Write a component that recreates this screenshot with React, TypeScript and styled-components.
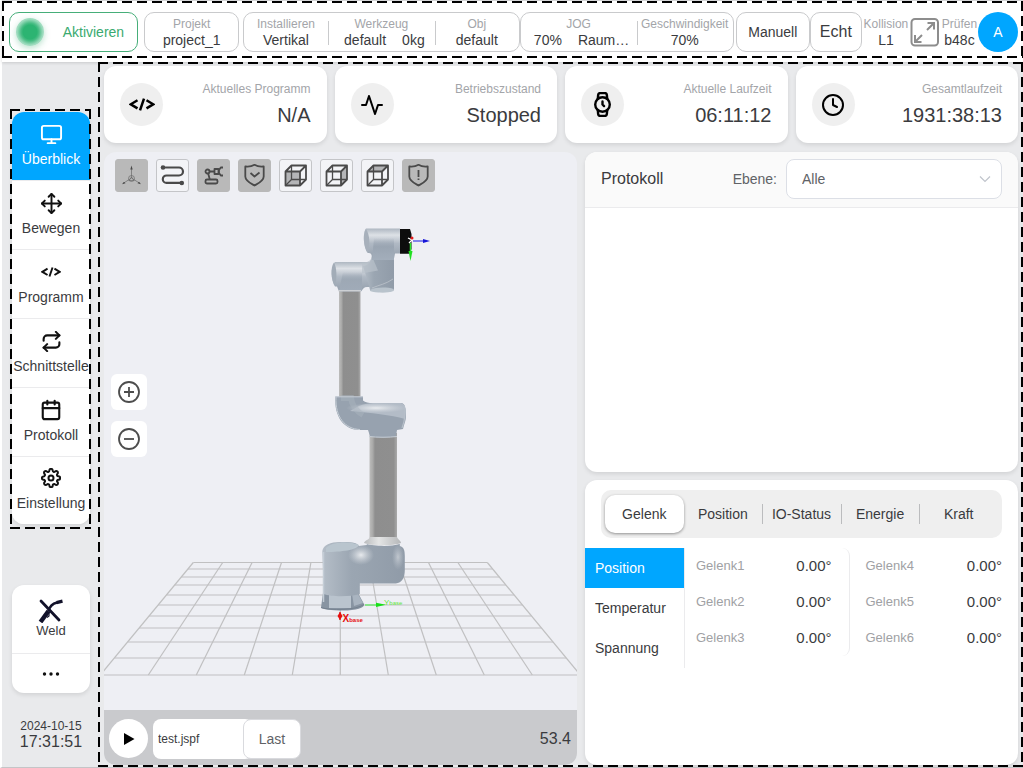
import React from "react";
import styled, { createGlobalStyle, css } from "styled-components";
import { FiActivity, FiCalendar, FiClock, FiMonitor, FiMove, FiRepeat, FiSettings, FiWatch } from "react-icons/fi";

const blue = "#00a6ff";
const muted = "#a3a5a9";
const line = "#ebebed";

const GlobalStyle = createGlobalStyle`
  *, *::before, *::after { box-sizing: border-box; }
  body {
    margin: 0;
    background: #e9eaec;
    color: #3a3b3e;
    font: 14px/16px "Liberation Sans", Arial, sans-serif;
  }
  button, input, select { font: inherit; color: inherit; margin: 0; }
  button { cursor: pointer; padding: 0; border: 0; background: none; }
  svg { display: block; flex: none; }
`;

const dashX = "repeating-linear-gradient(90deg, #000 0 10px, transparent 10px 15px)";
const dashY = "repeating-linear-gradient(180deg, #000 0 10px, transparent 10px 15px)";

/* Dashed frame laid over a region of the page. */
const Outline = styled.div<{ $inset?: string }>`
  position: absolute;
  inset: ${(p) => p.$inset ?? "0"};
  z-index: 3;
  pointer-events: none;
  background:
    ${dashX} top / 100% 2px no-repeat,
    ${dashX} bottom / 100% 2px no-repeat,
    ${dashY} left / 2px 100% no-repeat,
    ${dashY} right / 2px 100% no-repeat;
`;

const Page = styled.div`
  display: flex;
  flex-direction: column;
  min-height: 100vh;
  border-left: 2px solid #fff;
  border-bottom: 1px solid #c4c5c7;
`;

const Header = styled.header`
  position: relative;
  display: grid;
  grid-template-columns: 129fr 101fr 280fr 214fr 76fr 52fr 48fr 31px 37fr 40px;
  align-items: center;
  height: 62px;
  padding: 1px 5px 0 7px;
  background: #fff;
  border-top: 1px solid #d5d6d8;
  box-shadow: 0 1px 3px rgba(0, 0, 0, 0.14);
  z-index: 2;
`;

const box = css`
  height: 40px;
  border: 1px solid #c9cacc;
  border-radius: 10px;
  background: #fff;
`;

const EnableButton = styled.button`
  ${box}
  display: flex;
  align-items: center;
  justify-content: space-between;
  padding: 0 13px 0 6px;
  color: #3aaa70;
  border-color: #46ae79;
`;

const StatusLight = styled.span`
  width: 28px;
  height: 28px;
  border-radius: 50%;
  background: radial-gradient(circle, #2cb472 0 7px, #49bd85 9px, #9fdcbf 13px);
  box-shadow: 0 2px 6px rgba(58, 170, 112, 0.35);
`;

const Group = styled.div<{ $cols: string; $gap?: number }>`
  ${box}
  display: grid;
  grid-template-columns: ${(p) => p.$cols};
  align-items: center;
  margin-left: ${(p) => p.$gap ?? 0}px;
`;

const Field = styled.div<{ $split?: boolean }>`
  position: relative;
  display: flex;
  flex-direction: column;
  align-items: center;
  min-width: 0;
  white-space: nowrap;
  &::before {
    content: ${(p) => (p.$split ? '""' : "none")};
    position: absolute;
    left: 0;
    top: 4px;
    height: 24px;
    border-left: 1px solid #c9cacc;
  }
`;

const FieldLabel = styled.span`
  font-size: 12px;
  line-height: 15px;
  color: ${muted};
`;

const FieldValue = styled.span<{ $pair?: boolean }>`
  display: flex;
  gap: 16px;
  padding-left: ${(p) => (p.$pair ? "6px" : "0")};
`;

const ModeButton = styled.button<{ $large?: boolean; $gap?: boolean }>`
  ${box}
  font-size: ${(p) => (p.$large ? "16px" : "14px")};
  margin-left: ${(p) => (p.$gap ? "2px" : "0")};
`;

const Avatar = styled.button`
  width: 40px;
  height: 40px;
  border-radius: 50%;
  background: ${blue};
  color: #fff;
`;

const Body = styled.div`
  display: flex;
  flex: 1;
`;

const Sidebar = styled.aside`
  display: flex;
  flex-direction: column;
  width: 96px;
  flex: none;
  padding: 50px 8px 10px 10px;
`;

const MenuWrap = styled.div`
  position: relative;
`;

const card = css`
  background: #fff;
  border-radius: 12px;
  box-shadow: 0 2px 4px rgba(0, 0, 0, 0.1);
`;

const Menu = styled.nav`
  ${card}
  overflow: hidden;
`;

const MenuButton = styled.button<{ $active?: boolean }>`
  display: flex;
  flex-direction: column;
  align-items: center;
  gap: 5px;
  width: 100%;
  height: 69px;
  padding-top: 10px;
  white-space: nowrap;
  border-bottom: 1px solid ${line};
  background: ${(p) => (p.$active ? blue : "#fff")};
  color: ${(p) => (p.$active ? "#fff" : "inherit")};
  svg { color: ${(p) => (p.$active ? "#fff" : "#111")}; }
  &:last-child { border-bottom: 0; height: 67px; padding-top: 9px; }
`;

const IconSlot = styled.span`
  display: grid;
  place-items: center;
  height: 24px;
`;

const Plugins = styled.div`
  ${card}
  margin-top: 61px;
  overflow: hidden;
`;

const PluginButton = styled.button<{ $height: number }>`
  display: flex;
  flex-direction: column;
  align-items: center;
  justify-content: center;
  width: 100%;
  height: ${(p) => p.$height}px;
  font-size: 13px;
  & + & { border-top: 1px solid ${line}; }
`;

const DateTime = styled.div`
  margin-top: 26px;
  text-align: center;
  font-size: 12px;
  line-height: 14px;
`;

const Time = styled.time`
  display: block;
  font-size: 16px;
  line-height: 18px;
`;

const Content = styled.main`
  position: relative;
  flex: 1;
  min-width: 0;
  display: flex;
  flex-direction: column;
  gap: 9px;
  padding: 4px 5px 2px 6px;
`;

const Stats = styled.section`
  display: grid;
  grid-template-columns: repeat(4, 1fr);
  gap: 8px;
`;

const StatCard = styled.article`
  ${card}
  display: flex;
  align-items: center;
  justify-content: space-between;
  height: 77px;
  padding: 0 16px;
`;

const StatIcon = styled.span`
  display: grid;
  place-items: center;
  width: 43px;
  height: 43px;
  border-radius: 50%;
  background: #efefef;
  color: #000;
`;

const StatText = styled.div`
  display: flex;
  flex-direction: column;
  gap: 6px;
  text-align: right;
  white-space: nowrap;
`;

const StatLabel = styled.span`
  font-size: 12px;
  line-height: 15px;
  color: ${muted};
`;

const StatValue = styled.strong`
  font-size: 20px;
  font-weight: 400;
  line-height: 24px;
`;

const Panels = styled.div`
  flex: 1;
  display: grid;
  grid-template-columns: 473fr 433fr;
  gap: 8px;
`;

const Viewer = styled.section`
  display: flex;
  flex-direction: column;
  border-radius: 12px;
  overflow: hidden;
  background: #eeeff4;
`;

const Stage = styled.div`
  position: relative;
  flex: 1;
  min-height: 0;
`;

const Scene = styled.svg`
  width: 100%;
  height: auto;
`;

const ViewTools = styled.div`
  position: absolute;
  left: 11px;
  top: 7px;
  display: flex;
  gap: 8px;
`;

const ToolButton = styled.button<{ $on?: boolean }>`
  display: grid;
  place-items: center;
  width: 33px;
  height: 33px;
  border-radius: 3px;
  border: 1px solid ${(p) => (p.$on ? "#b9b9b9" : "#c4c5c8")};
  background: ${(p) => (p.$on ? "#b9b9b9" : "#f3f4f7")};
  color: #4a4a4a;
`;

const ZoomTools = styled.div`
  position: absolute;
  left: 7px;
  top: 222px;
  display: flex;
  flex-direction: column;
  gap: 11px;
`;

const ZoomButton = styled.button`
  display: grid;
  place-items: center;
  width: 36px;
  height: 36px;
  border-radius: 6px;
  background: #fff;
  color: #4d4d4d;
`;

const PlayBar = styled.form`
  display: flex;
  align-items: center;
  height: 55px;
  padding: 2px 6px 0 5px;
  background: #c9cacd;
`;

const PlayButton = styled.button`
  display: grid;
  place-items: center;
  width: 39px;
  height: 39px;
  border-radius: 50%;
  background: #fff;
`;

const FileInput = styled.input`
  width: 100px;
  height: 40px;
  margin-left: 5px;
  padding: 0 5px;
  border: 0;
  border-radius: 8px;
  background: #fff;
  font-size: 12px;
`;

const LoadButton = styled.button`
  width: 58px;
  height: 40px;
  margin-left: -10px;
  border: 1px solid #d9dade;
  border-radius: 8px;
  background: #fff;
  color: #606266;
`;

const Readout = styled.output`
  margin-left: auto;
  font-size: 16px;
`;

const SidePanels = styled.div`
  display: flex;
  flex-direction: column;
  gap: 8px;
  min-width: 0;
`;

const LogPanel = styled.section`
  ${card}
  height: 320px;
  overflow: hidden;
`;

const LogHead = styled.div`
  display: flex;
  align-items: center;
  height: 56px;
  padding: 0 16px 2px;
  background: #fafafa;
  border-bottom: 1px solid ${line};
`;

const LogTitle = styled.h2`
  margin: 0 auto 0 0;
  font-size: 16px;
  font-weight: 400;
`;

const LevelLabel = styled.label`
  margin-right: 9px;
  color: #606266;
`;

const SelectWrap = styled.span`
  position: relative;
  width: 216px;
  svg {
    position: absolute;
    right: 11px;
    top: 14px;
    pointer-events: none;
  }
`;

const LevelSelect = styled.select`
  appearance: none;
  width: 100%;
  height: 40px;
  padding: 0 15px;
  border: 1px solid #dcdfe6;
  border-radius: 8px;
  background: #fff;
  color: #606266;
`;

const DataPanel = styled.section`
  ${card}
  flex: 1;
  padding-top: 10px;
`;

const Tabs = styled.div`
  display: grid;
  grid-template-columns: repeat(5, 1fr);
  height: 48px;
  margin: 0 16px;
  padding: 5px 4px;
  border-radius: 10px;
  background: #efefef;
`;

const Tab = styled.button<{ $active?: boolean; $split?: boolean }>`
  position: relative;
  white-space: nowrap;
  border-radius: 10px;
  background: ${(p) => (p.$active ? "#fff" : "none")};
  box-shadow: ${(p) => (p.$active ? "0 1px 3px rgba(0, 0, 0, 0.4)" : "none")};
  &::before {
    content: ${(p) => (p.$split ? '""' : "none")};
    position: absolute;
    left: 0;
    top: 9px;
    height: 20px;
    border-left: 1px solid #bbbcbe;
  }
`;

const DataBody = styled.div`
  display: grid;
  grid-template-columns: 100px 165fr 169fr;
  align-items: start;
  margin-top: 10px;
`;

const Kinds = styled.div`
  display: flex;
  flex-direction: column;
  border-right: 1px solid ${line};
`;

const KindButton = styled.button<{ $active?: boolean }>`
  height: 40px;
  padding-left: 10px;
  text-align: left;
  background: ${(p) => (p.$active ? blue : "none")};
  color: ${(p) => (p.$active ? "#fff" : "inherit")};
`;

const JointBlock = styled.div<{ $first?: boolean }>`
  padding: ${(p) => (p.$first ? "0 17px 0 11px" : "0 16px")};
  border-right: ${(p) => (p.$first ? "1px solid #ebebed" : "0")};
  border-radius: 8px;
`;

const Joints = styled.table`
  width: 100%;
  border-collapse: collapse;
  th, td { height: 36px; padding: 0; }
  th { text-align: left; font-weight: 400; font-size: 13px; color: #a0a1a4; }
  td { text-align: right; font-size: 15px; }
`;

const CodeIcon = ({ width }: { width: number }) => (
  <svg width={width} height={width / 2} viewBox="0 0 26 13" fill="none" stroke="currentColor" strokeWidth="2.5">
    <path d="M8.500 2.200 1.800 6.300l6.700 4.100M17.500 2.200l6.700 4.100-6.700 4.100M15 .6 11 12.400" />
  </svg>
);

const ExpandIcon = () => (
  <svg width="30" height="30" viewBox="0 0 30 30" fill="none" stroke="#8d8d8d" strokeWidth="2">
    <rect x="1.500" y="2" width="26.500" height="26.500" rx="3.500" />
    <path d="M17 13 24 6M17.500 6H24v6.500M12 18l-7 7M5 18v7h6.500" />
  </svg>
);

const WeldIcon = () => (
  <svg width="28" height="24" viewBox="0 0 28 24" fill="none" stroke="#12122a">
    <path d="M4 2 22 21" strokeWidth="2.800" strokeLinecap="round" />
    <path d="M11.500 12 3.500 23" strokeWidth="4.500" />
    <path d="M11.500 12C13 6 16 4.500 20 3.500" strokeWidth="2.500" />
    <path d="m19.500 3.600 6-1.500" strokeWidth="3.200" />
    <path d="M12 13.500v3.500l-2 1.500" strokeWidth="1.200" />
  </svg>
);

const DotsIcon = () => (
  <svg width="18" height="6" viewBox="0 0 18 6" fill="#111">
    <circle cx="2.500" cy="3" r="1.700" />
    <circle cx="9" cy="3" r="1.700" />
    <circle cx="15.500" cy="3" r="1.700" />
  </svg>
);

const ToolSvg = ({ children }: { children: React.ReactNode }) => (
  <svg width="25" height="25" viewBox="0 0 25 25" fill="none" stroke="currentColor" strokeWidth="1.800" strokeLinejoin="round">
    {children}
  </svg>
);

const AxesIcon = () => (
  <ToolSvg>
    <g strokeWidth=".7" stroke="#6a6a6a">
      <path d="M12.500 15V5M12.500 15 4 20.500M12.500 15l8.500 5.500" />
      <circle cx="12.500" cy="15.500" r="3" />
      <path d="m10 17.500 2.500-3.500 2.500 3.500z" />
    </g>
    <path d="m12.500 2.500 1.200 4h-2.400zM3 21.300l2-2.600 1.500 1.600zM22 21.300l-2-2.600-1.500 1.600z" fill="currentColor" stroke="none" />
  </ToolSvg>
);

const PathIcon = () => (
  <ToolSvg>
    <path d="M3 4.500h16a4 4 0 0 1 0 8H6.500a3.700 3.700 0 0 0 0 7.400H22" strokeWidth="2.200" />
    <g fill="currentColor" stroke="none">
      <circle cx="3" cy="4.500" r="2.300" />
      <circle cx="21.800" cy="20" r="2.300" />
    </g>
  </ToolSvg>
);

const ArmIcon = () => (
  <ToolSvg>
    <circle cx="6.500" cy="8.500" r="2" />
    <path d="M8.500 8.500h5M7.200 10.500l1.600 6M13.500 6h4v5h-4zM22 4.500h-2.200L18 7v3l1.800 2.500H22" />
    <rect x="4.500" y="16.500" width="12" height="4" rx="1.500" />
  </ToolSvg>
);

const shield = "M12.500 1.800C9.500 3.600 7 4 3.300 3.500v10c0 4.500 5.400 6.800 9.200 9 3.800-2.200 9.200-4.500 9.200-9v-10c-3.700.5-6.200.1-9.200-1.700z";

const ShieldIcon = ({ mark }: { mark: string }) => (
  <ToolSvg>
    <path d={shield} />
    <path d={mark} />
  </ToolSvg>
);

const CubeIcon = ({ face }: { face: string }) => (
  <ToolSvg>
    <path d={face} fill="#b4b5b7" stroke="none" />
    <path d="M2.500 8.500h14.500v14H2.500zM2.500 8.500l6-6H23l-6 6M23 2.500v14l-6 6" />
    <path d="M8.500 2.500v14H23M8.500 16.500l-6 6" strokeWidth="1.300" />
  </ToolSvg>
);

const ZoomIcon = ({ plus }: { plus?: boolean }) => (
  <svg width="24" height="24" viewBox="0 0 24 24" fill="none" stroke="currentColor" strokeWidth="1.800">
    <circle cx="12" cy="12" r="10" />
    <path d={plus ? "M7 12h10M12 7v10" : "M7 12h10"} />
  </svg>
);

const rowsY = [562.5, 569, 577, 585, 595, 605, 616, 628, 642, 658, 675];
const gridLines = Array.from({ length: 11 }, (_, i) => i - 5);

const RobotScene = () => (
  <Scene viewBox="104 152 473 558" role="img" aria-label="Roboter">
    <defs>
      <linearGradient id="shellV" x1="0" y1="0" x2="0" y2="1">
        <stop offset="0" stopColor="#aeb7c1" />
        <stop offset=".22" stopColor="#dde1e6" />
        <stop offset=".5" stopColor="#b0b9c4" />
        <stop offset="1" stopColor="#949fac" />
      </linearGradient>
      <linearGradient id="shellH" x1="0" y1="0" x2="1" y2="0">
        <stop offset="0" stopColor="#b5bec8" />
        <stop offset=".35" stopColor="#9ba6b2" />
        <stop offset="1" stopColor="#909ba8" />
      </linearGradient>
      <linearGradient id="neck" x1="0" y1="0" x2="0" y2="1">
        <stop offset="0" stopColor="#9aa5b2" stopOpacity="0" />
        <stop offset=".4" stopColor="#9aa5b2" />
        <stop offset="1" stopColor="#a3aebb" />
      </linearGradient>
      <linearGradient id="tube" x1="0" y1="0" x2="1" y2="0">
        <stop offset="0" stopColor="#bdbdbc" />
        <stop offset=".12" stopColor="#a9a9a8" />
        <stop offset=".2" stopColor="#8e8e8e" />
        <stop offset=".88" stopColor="#8f8f8f" />
        <stop offset="1" stopColor="#aaaaaa" />
      </linearGradient>
      <linearGradient id="collar" x1="0" y1="0" x2="1" y2="0">
        <stop offset="0" stopColor="#b9bbbd" />
        <stop offset=".4" stopColor="#e4e5e5" />
        <stop offset="1" stopColor="#b5b7b9" />
      </linearGradient>
      <radialGradient id="glow">
        <stop offset="0" stopColor="#f0f2f4" stopOpacity=".9" />
        <stop offset="1" stopColor="#d5dae0" stopOpacity="0" />
      </radialGradient>
    </defs>

    <g stroke="#c0c0c1" strokeWidth="1.200">
      {rowsY.map((y) => {
        const half = 147 + ((y - 562.5) * 93) / 112.5;
        return <line key={y} x1={340.3 - half} x2={340.3 + half} y1={y} y2={y} />;
      })}
      {gridLines.map((i) => (
        <line key={i} x1={340.3 + i * 29.4} y1={562.5} x2={340.3 + i * 48} y2={675} />
      ))}
    </g>

    <rect x="339" y="288" width="21.500" height="112" fill="url(#tube)" />
    <rect x="369.500" y="433" width="27.500" height="108" fill="url(#tube)" />

    <path d="M335 262h40v25l-8 0c-3 0-4 2-6 4.500h-22l-2-5h-2c-4-6-5-20 0-24.500z" fill="url(#shellV)" />
    <path d="M343 272h19v19h-23z" fill="url(#neck)" opacity=".8" />
    <path d="M334 262.500c-4 5-3 18 1 23 2-7 2-18-1-23z" fill="#a2acb7" />
    <path d="M372 246h22v44c-5 3-17 3-24 0l-1-4c-2-8-4-13-6-20 5 0 9-5 9-12z" fill="url(#shellH)" />
    <path d="M362 262.500c6 0 9-2 10-6l6 14-16 3z" fill="#b9c2cb" opacity=".7" />
    <path d="M366 228.500h34v25h-5l-1 5h-22c0-4-1-6-4-5.500-4-3-6-20-2-24.500z" fill="url(#shellV)" />
    <path d="M374 238h20v22h-22z" fill="url(#neck)" />
    <path d="M366 229c-4 5-2 20 2 23.500 2-7 2-18-2-23.500z" fill="#a7b0bb" />
    <path d="M370 290c6-3 17-3 23.700-1v2c-6 2-18 2-23.700 0z" fill="#b9c3cc" />
    <path d="M338.500 290.800h22.500" stroke="#d9dadb" strokeWidth="1.200" />
    <path d="M372 288c7-3 14-4 21-9" stroke="#c3c9d0" strokeWidth=".7" fill="none" />
    <path d="M400 229h10l1.500 5v15l-2 4.700H400z" fill="#0d0d0d" />

    <path d="M335.300 396.500H363v4c3 3 8 2.500 14 2.500h24c4 0 5 6 5 13 0 5-2 8-3 13l-6 1-1 6c-7 2-20 2-26 0l-2-6h-8c-16 0-26-13-24.700-33.500z" fill="#97a2af" />
    <path d="M350 411c10-6 14-8 28-8h23c5 1 5 8 4 16-14-4-34-6-55-8z" fill="#b3bcc7" />
    <ellipse cx="376" cy="408" rx="30" ry="5" fill="url(#glow)" />
    <path d="M341 398h10c1 8 5 13 12 17" fill="none" stroke="#a9b3be" strokeWidth="6" opacity=".5" />
    <path d="M404 405c2 5 1 16-2 23" fill="none" stroke="#b7c0ca" strokeWidth="1.200" />
    <path d="M335.500 396.800H363M369 436.500c8 1 20 1 28 0M336 397c-1 20 9 32 24 32.500" fill="none" stroke="#c6ced6" />

    <path d="M370 537h27c1 3 4 3.500 4 6-8 3-29 3-37 0 1-3 5-3 6-6z" fill="url(#collar)" />
    <path d="M323 593h35l6 11c1 4-8 6.500-21 6.500-12 0-21-1-22-3z" fill="#8894a2" />
    <path d="M329 595h22v13h-22z" fill="#bac4ce" />
    <path d="M352 594h6l5 9-9 3z" fill="#a9b4c0" />
    <path d="M322.300 551c1-6 8-9 18-9 9 0 17 0 18.500 4l8-1v-1c6 2 24 3 33 0v2c4 1 5 4 5 10v14c0 8-3 13-9 13.500h-36V594c-9 3-29 3-36 0z" fill="url(#shellH)" />
    <path d="M326 548c4-6 23-8 33-3-2 5-18 7-33 7z" fill="#b9c5ce" />
    <ellipse cx="361" cy="555" rx="13" ry="10" fill="url(#glow)" />
    <ellipse cx="398" cy="557" rx="6" ry="13" fill="url(#glow)" opacity=".55" />
    <path d="M323.500 552v50" stroke="#c4cdd6" strokeWidth="1.500" />
    <path d="M321 607.500c9 3 35 3 43-3" fill="none" stroke="#75818f" />

    <path d="M413 241h12" stroke="#1919e6" />
    <path d="m423 239 7 2-7 2z" fill="#1515d8" />
    <path d="M410.500 243v9" stroke="#2ee62e" strokeWidth="1.500" />
    <path d="m408.500 251 2 10 2-10z" fill="#20df20" />
    <path d="m408 238 4 2-3 3" fill="none" stroke="#fff" strokeWidth="1.300" />
    <circle cx="412" cy="238" r="1.500" fill="#e31b1b" />

    <path d="M365 605h14" stroke="#3cf03c" />
    <path d="m376 602.800 10 2-10 2.200z" fill="#18e018" />
    <path d="M340 612v8" stroke="#e60f0f" strokeWidth="1.200" />
    <path d="m340 612 2.500 4-2.500 4-2.500-4z" fill="#e60f0f" />
    <g fontFamily="Liberation Sans, Arial, sans-serif" fontWeight="700">
      <text x="342.500" y="621.500" fontSize="10" fill="#e60f0f">
        X<tspan fontSize="6">base</tspan>
      </text>
      <text x="384" y="605" fontSize="8" fill="#63e63c" fontWeight="400">
        Y<tspan fontSize="6">base</tspan>
      </text>
    </g>
  </Scene>
);

const menu = [
  { label: "Überblick", icon: <FiMonitor size={23} /> },
  { label: "Bewegen", icon: <FiMove size={23} /> },
  { label: "Programm", icon: <CodeIcon width={20} /> },
  { label: "Schnittstelle", icon: <FiRepeat size={21} strokeWidth={2.4} /> },
  { label: "Protokoll", icon: <FiCalendar size={22} strokeWidth={2.3} /> },
  { label: "Einstellung", icon: <FiSettings size={20} strokeWidth={2.4} /> },
];

const stats = [
  { label: "Aktuelles Programm", value: "N/A", icon: <CodeIcon width={26} /> },
  { label: "Betriebszustand", value: "Stopped", icon: <FiActivity size={24} /> },
  { label: "Aktuelle Laufzeit", value: "06:11:12", icon: <FiWatch size={25} strokeWidth={2.3} /> },
  { label: "Gesamtlaufzeit", value: "1931:38:13", icon: <FiClock size={24} /> },
];

const tools = [
  { label: "Koordinatensystem", on: true, icon: <AxesIcon /> },
  { label: "Bahn", icon: <PathIcon /> },
  { label: "Robotermodell", on: true, icon: <ArmIcon /> },
  { label: "Sicherheit", on: true, icon: <ShieldIcon mark="m8.500 10 4 3.500 5-4" /> },
  { label: "Vorderansicht", icon: <CubeIcon face="M2.500 8.500h14.500v14H2.500z" /> },
  { label: "Seitenansicht", icon: <CubeIcon face="m17 8.500 6-6v14l-6 6z" /> },
  { label: "Draufsicht", icon: <CubeIcon face="M2.500 8.500l6-6H23l-6 6z" /> },
  { label: "Warnung", on: true, icon: <ShieldIcon mark="M12.500 7v7M12.500 15.500v1.500" /> },
];

const tabs = ["Gelenk", "Position", "IO-Status", "Energie", "Kraft"];
const kinds = ["Position", "Temperatur", "Spannung"];

const HeaderField = ({ label, values, split }: { label: string; values: string[]; split?: boolean }) => (
  <Field $split={split}>
    <FieldLabel>{label}</FieldLabel>
    <FieldValue $pair={values.length > 1}>
      {values.map((v) => (
        <span key={v}>{v}</span>
      ))}
    </FieldValue>
  </Field>
);

const JointTable = ({ names, first }: { names: string[]; first?: boolean }) => (
  <JointBlock $first={first}>
    <Joints>
      <tbody>
        {names.map((name) => (
          <tr key={name}>
            <th scope="row">{name}</th>
            <td>0.00°</td>
          </tr>
        ))}
      </tbody>
    </Joints>
  </JointBlock>
);

export default function App() {
  return (
    <Page>
      <GlobalStyle />
      <Header>
        <EnableButton>
          <StatusLight />
          Aktivieren
        </EnableButton>
        <Group $cols="1fr" $gap={6}>
          <HeaderField label="Projekt" values={["project_1"]} />
        </Group>
        <Group $cols="84fr 108fr 84fr" $gap={4}>
          <HeaderField label="Installieren" values={["Vertikal"]} />
          <HeaderField label="Werkzeug" values={["default", "0kg"]} split />
          <HeaderField label="Obj" values={["default"]} split />
        </Group>
        <Group $cols="117fr 97fr">
          <HeaderField label="JOG" values={["70%", "Raum…"]} />
          <HeaderField label="Geschwindigkeit" values={["70%"]} split />
        </Group>
        <ModeButton $gap>Manuell</ModeButton>
        <ModeButton $large>Echt</ModeButton>
        <HeaderField label="Kollision" values={["L1"]} />
        <button aria-label="Vollbild">
          <ExpandIcon />
        </button>
        <HeaderField label="Prüfen" values={["b48c"]} />
        <Avatar>A</Avatar>
        <Outline $inset="0 0 4px 0" />
      </Header>

      <Body>
        <Sidebar>
          <MenuWrap>
            <Menu>
              {menu.map((m, i) => (
                <MenuButton key={m.label} $active={i === 0}>
                  <IconSlot>{m.icon}</IconSlot>
                  {m.label}
                </MenuButton>
              ))}
            </Menu>
            <Outline $inset="-3px -1px -5px -2px" />
          </MenuWrap>
          <Plugins>
            <PluginButton $height={68}>
              <WeldIcon />
              Weld
            </PluginButton>
            <PluginButton $height={40} aria-label="Mehr">
              <DotsIcon />
            </PluginButton>
          </Plugins>
          <DateTime>
            2024-10-15
            <Time>17:31:51</Time>
          </DateTime>
        </Sidebar>

        <Content>
          <Outline />
          <Stats>
            {stats.map((s) => (
              <StatCard key={s.label}>
                <StatIcon>{s.icon}</StatIcon>
                <StatText>
                  <StatLabel>{s.label}</StatLabel>
                  <StatValue>{s.value}</StatValue>
                </StatText>
              </StatCard>
            ))}
          </Stats>

          <Panels>
            <Viewer>
              <Stage>
                <RobotScene />
                <ViewTools>
                  {tools.map((t) => (
                    <ToolButton key={t.label} $on={t.on} aria-label={t.label}>
                      {t.icon}
                    </ToolButton>
                  ))}
                </ViewTools>
                <ZoomTools>
                  <ZoomButton aria-label="Vergrößern">
                    <ZoomIcon plus />
                  </ZoomButton>
                  <ZoomButton aria-label="Verkleinern">
                    <ZoomIcon />
                  </ZoomButton>
                </ZoomTools>
              </Stage>
              <PlayBar onSubmit={(e) => e.preventDefault()}>
                <PlayButton type="button" aria-label="Abspielen">
                  <svg width="12" height="14" viewBox="0 0 12 14">
                    <path d="M1 1v12l10.500-6z" />
                  </svg>
                </PlayButton>
                <FileInput aria-label="Datei" defaultValue="test.jspf" />
                <LoadButton type="button">Last</LoadButton>
                <Readout>53.4</Readout>
              </PlayBar>
            </Viewer>

            <SidePanels>
              <LogPanel>
                <LogHead>
                  <LogTitle>Protokoll</LogTitle>
                  <LevelLabel htmlFor="level">Ebene:</LevelLabel>
                  <SelectWrap>
                    <LevelSelect id="level" defaultValue="Alle">
                      <option>Alle</option>
                    </LevelSelect>
                    <svg width="12" height="12" viewBox="0 0 12 12" fill="none" stroke="#c0c4cc" strokeWidth="1.200">
                      <path d="m1 3.500 5 5 5-5" />
                    </svg>
                  </SelectWrap>
                </LogHead>
              </LogPanel>
              <DataPanel>
                <Tabs role="tablist">
                  {tabs.map((t, i) => (
                    <Tab key={t} role="tab" aria-selected={i === 0} $active={i === 0} $split={i > 1}>
                      {t}
                    </Tab>
                  ))}
                </Tabs>
                <DataBody>
                  <Kinds>
                    {kinds.map((k, i) => (
                      <KindButton key={k} $active={i === 0}>
                        {k}
                      </KindButton>
                    ))}
                  </Kinds>
                  <JointTable names={["Gelenk1", "Gelenk2", "Gelenk3"]} first />
                  <JointTable names={["Gelenk4", "Gelenk5", "Gelenk6"]} />
                </DataBody>
              </DataPanel>
            </SidePanels>
          </Panels>
        </Content>
      </Body>
    </Page>
  );
}
